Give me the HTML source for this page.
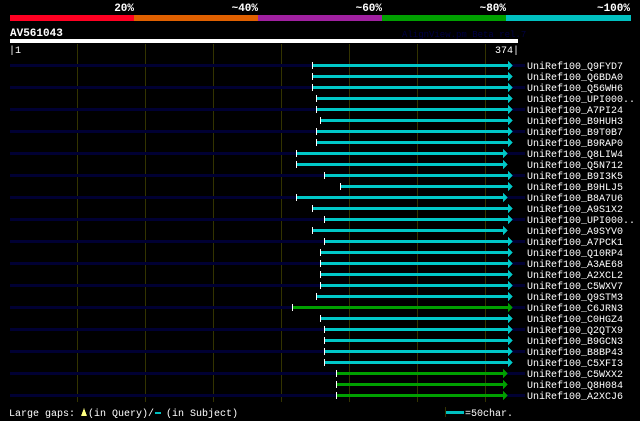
<!DOCTYPE html>
<html><head><meta charset="utf-8"><style>
html,body{margin:0;padding:0;background:#000;width:640px;height:421px;overflow:hidden}
svg{display:block}
text{font-family:"Liberation Mono","DejaVu Sans Mono",monospace;fill:#fff}
.bg{fill:#000033}.c{fill:#00c8c8}.g{fill:#00a000}.w{fill:#fff}
</style></head><body>
<svg width="640" height="421" xmlns="http://www.w3.org/2000/svg" shape-rendering="crispEdges">
<g font-size="11" font-weight="bold" text-anchor="end">
<text x="134" y="11">20%</text><text x="258" y="11">~40%</text><text x="382" y="11">~60%</text><text x="506" y="11">~80%</text><text x="630" y="11">~100%</text>
</g>
<rect x="10" y="15" width="124" height="6" fill="#ff0022"/>
<rect x="134" y="15" width="124" height="6" fill="#e06000"/>
<rect x="258" y="15" width="124" height="6" fill="#a020a0"/>
<rect x="382" y="15" width="124" height="6" fill="#00a000"/>
<rect x="506" y="15" width="125" height="6" fill="#00c0c0"/>
<text x="10" y="36" font-size="11" font-weight="bold">AV561043</text>
<text x="402" y="37" font-size="9" style="fill:#000044">AlignView.pm Beta rel.7</text>
<rect x="10" y="39" width="508" height="4" fill="#fff"/>
<text x="9" y="53" font-size="10">|1</text>
<text x="519" y="53" font-size="10" text-anchor="end">374|</text>
<g fill="#333300">
<rect x="77" y="44" width="1" height="358"/><rect x="145" y="44" width="1" height="358"/><rect x="213" y="44" width="1" height="358"/><rect x="281" y="44" width="1" height="358"/><rect x="349" y="44" width="1" height="358"/><rect x="417" y="44" width="1" height="358"/><rect x="485" y="44" width="1" height="358"/>
</g>
<g font-size="10">
<g transform="translate(0,65)"><rect class="bg" x="10" y="-1" width="515" height="3"/><rect class="c" x="312" y="-1" width="196" height="3"/><rect class="w" x="312" y="-3" width="1" height="7"/><polygon class="c" points="508,-4 513,0.5 508,5"/><text x="527" y="4">UniRef100_Q9FYD7</text></g>
<g transform="translate(0,76)"><rect class="c" x="312" y="-1" width="196" height="3"/><rect class="w" x="312" y="-3" width="1" height="7"/><polygon class="c" points="508,-4 513,0.5 508,5"/><text x="527" y="4">UniRef100_Q6BDA0</text></g>
<g transform="translate(0,87)"><rect class="bg" x="10" y="-1" width="515" height="3"/><rect class="c" x="312" y="-1" width="196" height="3"/><rect class="w" x="312" y="-3" width="1" height="7"/><polygon class="c" points="508,-4 513,0.5 508,5"/><text x="527" y="4">UniRef100_Q56WH6</text></g>
<g transform="translate(0,98)"><rect class="c" x="316" y="-1" width="192" height="3"/><rect class="w" x="316" y="-3" width="1" height="7"/><polygon class="c" points="508,-4 513,0.5 508,5"/><text x="527" y="4">UniRef100_UPI000..</text></g>
<g transform="translate(0,109)"><rect class="bg" x="10" y="-1" width="515" height="3"/><rect class="c" x="316" y="-1" width="192" height="3"/><rect class="w" x="316" y="-3" width="1" height="7"/><polygon class="c" points="508,-4 513,0.5 508,5"/><text x="527" y="4">UniRef100_A7PI24</text></g>
<g transform="translate(0,120)"><rect class="c" x="320" y="-1" width="188" height="3"/><rect class="w" x="320" y="-3" width="1" height="7"/><polygon class="c" points="508,-4 513,0.5 508,5"/><text x="527" y="4">UniRef100_B9HUH3</text></g>
<g transform="translate(0,131)"><rect class="bg" x="10" y="-1" width="515" height="3"/><rect class="c" x="316" y="-1" width="192" height="3"/><rect class="w" x="316" y="-3" width="1" height="7"/><polygon class="c" points="508,-4 513,0.5 508,5"/><text x="527" y="4">UniRef100_B9T0B7</text></g>
<g transform="translate(0,142)"><rect class="c" x="316" y="-1" width="192" height="3"/><rect class="w" x="316" y="-3" width="1" height="7"/><polygon class="c" points="508,-4 513,0.5 508,5"/><text x="527" y="4">UniRef100_B9RAP0</text></g>
<g transform="translate(0,153)"><rect class="bg" x="10" y="-1" width="515" height="3"/><rect class="c" x="296" y="-1" width="207" height="3"/><rect class="w" x="296" y="-3" width="1" height="7"/><polygon class="c" points="503,-4 508,0.5 503,5"/><text x="527" y="4">UniRef100_Q8LIW4</text></g>
<g transform="translate(0,164)"><rect class="c" x="296" y="-1" width="207" height="3"/><rect class="w" x="296" y="-3" width="1" height="7"/><polygon class="c" points="503,-4 508,0.5 503,5"/><text x="527" y="4">UniRef100_Q5N712</text></g>
<g transform="translate(0,175)"><rect class="bg" x="10" y="-1" width="515" height="3"/><rect class="c" x="324" y="-1" width="184" height="3"/><rect class="w" x="324" y="-3" width="1" height="7"/><polygon class="c" points="508,-4 513,0.5 508,5"/><text x="527" y="4">UniRef100_B9I3K5</text></g>
<g transform="translate(0,186)"><rect class="c" x="340" y="-1" width="168" height="3"/><rect class="w" x="340" y="-3" width="1" height="7"/><polygon class="c" points="508,-4 513,0.5 508,5"/><text x="527" y="4">UniRef100_B9HLJ5</text></g>
<g transform="translate(0,197)"><rect class="bg" x="10" y="-1" width="515" height="3"/><rect class="c" x="296" y="-1" width="207" height="3"/><rect class="w" x="296" y="-3" width="1" height="7"/><polygon class="c" points="503,-4 508,0.5 503,5"/><text x="527" y="4">UniRef100_B8A7U6</text></g>
<g transform="translate(0,208)"><rect class="c" x="312" y="-1" width="196" height="3"/><rect class="w" x="312" y="-3" width="1" height="7"/><polygon class="c" points="508,-4 513,0.5 508,5"/><text x="527" y="4">UniRef100_A9S1X2</text></g>
<g transform="translate(0,219)"><rect class="bg" x="10" y="-1" width="515" height="3"/><rect class="c" x="324" y="-1" width="184" height="3"/><rect class="w" x="324" y="-3" width="1" height="7"/><polygon class="c" points="508,-4 513,0.5 508,5"/><text x="527" y="4">UniRef100_UPI000..</text></g>
<g transform="translate(0,230)"><rect class="c" x="312" y="-1" width="191" height="3"/><rect class="w" x="312" y="-3" width="1" height="7"/><polygon class="c" points="503,-4 508,0.5 503,5"/><text x="527" y="4">UniRef100_A9SYV0</text></g>
<g transform="translate(0,241)"><rect class="bg" x="10" y="-1" width="515" height="3"/><rect class="c" x="324" y="-1" width="184" height="3"/><rect class="w" x="324" y="-3" width="1" height="7"/><polygon class="c" points="508,-4 513,0.5 508,5"/><text x="527" y="4">UniRef100_A7PCK1</text></g>
<g transform="translate(0,252)"><rect class="c" x="320" y="-1" width="188" height="3"/><rect class="w" x="320" y="-3" width="1" height="7"/><polygon class="c" points="508,-4 513,0.5 508,5"/><text x="527" y="4">UniRef100_Q10RP4</text></g>
<g transform="translate(0,263)"><rect class="bg" x="10" y="-1" width="515" height="3"/><rect class="c" x="320" y="-1" width="188" height="3"/><rect class="w" x="320" y="-3" width="1" height="7"/><polygon class="c" points="508,-4 513,0.5 508,5"/><text x="527" y="4">UniRef100_A3AE68</text></g>
<g transform="translate(0,274)"><rect class="c" x="320" y="-1" width="188" height="3"/><rect class="w" x="320" y="-3" width="1" height="7"/><polygon class="c" points="508,-4 513,0.5 508,5"/><text x="527" y="4">UniRef100_A2XCL2</text></g>
<g transform="translate(0,285)"><rect class="bg" x="10" y="-1" width="515" height="3"/><rect class="c" x="320" y="-1" width="188" height="3"/><rect class="w" x="320" y="-3" width="1" height="7"/><polygon class="c" points="508,-4 513,0.5 508,5"/><text x="527" y="4">UniRef100_C5WXV7</text></g>
<g transform="translate(0,296)"><rect class="c" x="316" y="-1" width="192" height="3"/><rect class="w" x="316" y="-3" width="1" height="7"/><polygon class="c" points="508,-4 513,0.5 508,5"/><text x="527" y="4">UniRef100_Q9STM3</text></g>
<g transform="translate(0,307)"><rect class="bg" x="10" y="-1" width="515" height="3"/><rect class="g" x="292" y="-1" width="216" height="3"/><rect class="w" x="292" y="-3" width="1" height="7"/><polygon class="g" points="508,-4 513,0.5 508,5"/><text x="527" y="4">UniRef100_C6JRN3</text></g>
<g transform="translate(0,318)"><rect class="c" x="320" y="-1" width="188" height="3"/><rect class="w" x="320" y="-3" width="1" height="7"/><polygon class="c" points="508,-4 513,0.5 508,5"/><text x="527" y="4">UniRef100_C0HGZ4</text></g>
<g transform="translate(0,329)"><rect class="bg" x="10" y="-1" width="515" height="3"/><rect class="c" x="324" y="-1" width="184" height="3"/><rect class="w" x="324" y="-3" width="1" height="7"/><polygon class="c" points="508,-4 513,0.5 508,5"/><text x="527" y="4">UniRef100_Q2QTX9</text></g>
<g transform="translate(0,340)"><rect class="c" x="324" y="-1" width="184" height="3"/><rect class="w" x="324" y="-3" width="1" height="7"/><polygon class="c" points="508,-4 513,0.5 508,5"/><text x="527" y="4">UniRef100_B9GCN3</text></g>
<g transform="translate(0,351)"><rect class="bg" x="10" y="-1" width="515" height="3"/><rect class="c" x="324" y="-1" width="184" height="3"/><rect class="w" x="324" y="-3" width="1" height="7"/><polygon class="c" points="508,-4 513,0.5 508,5"/><text x="527" y="4">UniRef100_B8BP43</text></g>
<g transform="translate(0,362)"><rect class="c" x="324" y="-1" width="184" height="3"/><rect class="w" x="324" y="-3" width="1" height="7"/><polygon class="c" points="508,-4 513,0.5 508,5"/><text x="527" y="4">UniRef100_C5XFI3</text></g>
<g transform="translate(0,373)"><rect class="bg" x="10" y="-1" width="515" height="3"/><rect class="g" x="336" y="-1" width="167" height="3"/><rect class="w" x="336" y="-3" width="1" height="7"/><polygon class="g" points="503,-4 508,0.5 503,5"/><text x="527" y="4">UniRef100_C5WXX2</text></g>
<g transform="translate(0,384)"><rect class="g" x="336" y="-1" width="167" height="3"/><rect class="w" x="336" y="-3" width="1" height="7"/><polygon class="g" points="503,-4 508,0.5 503,5"/><text x="527" y="4">UniRef100_Q8H084</text></g>
<g transform="translate(0,395)"><rect class="bg" x="10" y="-1" width="515" height="3"/><rect class="g" x="336" y="-1" width="167" height="3"/><rect class="w" x="336" y="-3" width="1" height="7"/><polygon class="g" points="503,-4 508,0.5 503,5"/><text x="527" y="4">UniRef100_A2XCJ6</text></g>
</g>
<text x="9" y="416" font-size="10">Large gaps:</text>
<polygon points="81,416 84,408 87,416" fill="#ffff80"/>
<text x="88" y="416" font-size="10">(in Query)/</text>
<rect x="155" y="412" width="6" height="2" fill="#00c0c0"/>
<text x="166" y="416" font-size="10">(in Subject)</text>
<rect x="445" y="407" width="1" height="10" fill="#333300"/>
<rect x="446" y="411" width="18" height="3" fill="#00c0c0"/>
<text x="465" y="416" font-size="10">=50char.</text>
</svg>
</body></html>
